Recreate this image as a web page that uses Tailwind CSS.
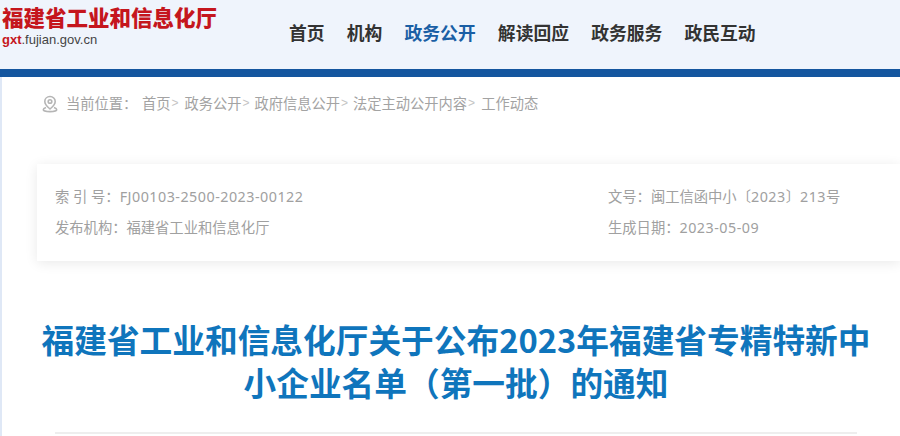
<!DOCTYPE html>
<html lang="zh-CN">
<head>
<meta charset="utf-8">
<title>福建省工业和信息化厅</title>
<script src="https://cdn.jsdelivr.net/npm/@tailwindcss/browser@4"></script>
</head>
<body class="w-[900px] h-[436px] overflow-hidden bg-white font-['Noto_Sans_CJK_SC','Liberation_Sans',sans-serif]">
    <!-- 顶部导航 -->
    <header class="h-[69px] bg-[#eff4fc] flex">
        <div class="w-[289px] pl-[2px] pt-[6px] shrink-0">
            <div class="text-[21.5px] leading-[27px] font-black font-['Liberation_Sans','Noto_Sans_CJK_SC',sans-serif] text-[#c5161d] whitespace-nowrap">福建省工业和信息化厅</div>
            <div class="text-[13px] leading-[13px] font-['Liberation_Sans'] text-[#444] whitespace-nowrap"><span class="text-[#c5161d] font-bold">gxt</span>.fujian.gov.cn</div>
        </div>
        <nav class="flex gap-[22.2px] pt-[20px] text-[17.8px] leading-[24px] font-bold text-[#333]">
            <a href="#">首页</a>
            <a href="#">机构</a>
            <a href="#" class="text-[#1a5fa5]">政务公开</a>
            <a href="#">解读回应</a>
            <a href="#">政务服务</a>
            <a href="#">政民互动</a>
        </nav>
    </header>
    <div class="h-[8px] bg-[#14569f]"></div>

    <main class="h-[359px] border-l-2 border-[#dfe8f6] overflow-hidden">
        <!-- 面包屑 -->
        <div class="flex items-center h-[52px] pl-[40px] text-[14.25px] text-[#a3a3a3] whitespace-nowrap">
            <svg class="w-[16px] h-[18px] mr-[8px] mt-[2px]" viewBox="0 0 16 18" fill="none" stroke="#b5b5b5" stroke-width="1.6">
                <path d="M8 1.500c-3 0-5.200 2.200-5.200 5 0 2.600 2.600 5.400 5.200 7.500 2.600-2.100 5.200-4.900 5.200-7.500 0-2.800-2.200-5-5.200-5z"/>
                <circle cx="8" cy="6.500" r="1.800"/>
                <path d="M4 12.500c-1.600.6-2.700 1.400-2.700 2.200 0 1 2.800 1.900 6.700 1.900s6.700-.9 6.700-1.900c0-.8-1.100-1.600-2.700-2.200"/>
            </svg>
            <span class="w-[76px]">当前位置：</span>
            <span>首页</span><span class="text-[12px] font-['Liberation_Sans'] text-[#c4c4c4] mx-[1px]">&gt;</span>
            <span class="ml-[5px]">政务公开</span><span class="text-[12px] font-['Liberation_Sans'] text-[#c4c4c4] mx-[1px]">&gt;</span>
            <span class="ml-[4px]">政府信息公开</span><span class="text-[12px] font-['Liberation_Sans'] text-[#c4c4c4] mx-[1px]">&gt;</span>
            <span class="ml-[4px]">法定主动公开内容</span><span class="text-[12px] font-['Liberation_Sans'] text-[#c4c4c4] mx-[1px]">&gt;</span>
            <span class="ml-[5px]">工作动态</span>
        </div>

        <!-- 信息卡片 -->
        <section class="mt-[35px] ml-[35px] h-[97px] bg-white shadow-[0_2px_12px_rgba(0,0,0,0.09)] flex text-[14.3px] leading-[31px] text-[#a0a0a0] pt-[17px] pl-[18px] whitespace-nowrap font-['Noto_Sans','Noto_Sans_CJK_SC',sans-serif]">
            <div class="w-[553px]">
                <p>索 引 号：<span class="tracking-[0.5px]">FJ00103-2500-2023-00122</span></p>
                <p>发布机构：福建省工业和信息化厅</p>
            </div>
            <div>
                <p>文号：闽工信函中小〔<span class="tracking-[0.5px]">2023</span>〕<span class="tracking-[0.5px]">213</span>号</p>
                <p>生成日期：<span class="tracking-[0.5px]">2023-05-09</span></p>
            </div>
        </section>

        <!-- 标题 -->
        <h1 class="mt-[56px] ml-[34px] w-[840px] text-center text-[32.7px] leading-[43px] font-bold text-[#0f75bc]">福建省工业和信息化厅关于公布2023年福建省专精特新中小企业名单（第一批）的通知</h1>
        <div class="mt-[29px] ml-[53px] w-[802px] h-[2px] bg-[#eeeeee]"></div>
    </main>
</body>
</html>
